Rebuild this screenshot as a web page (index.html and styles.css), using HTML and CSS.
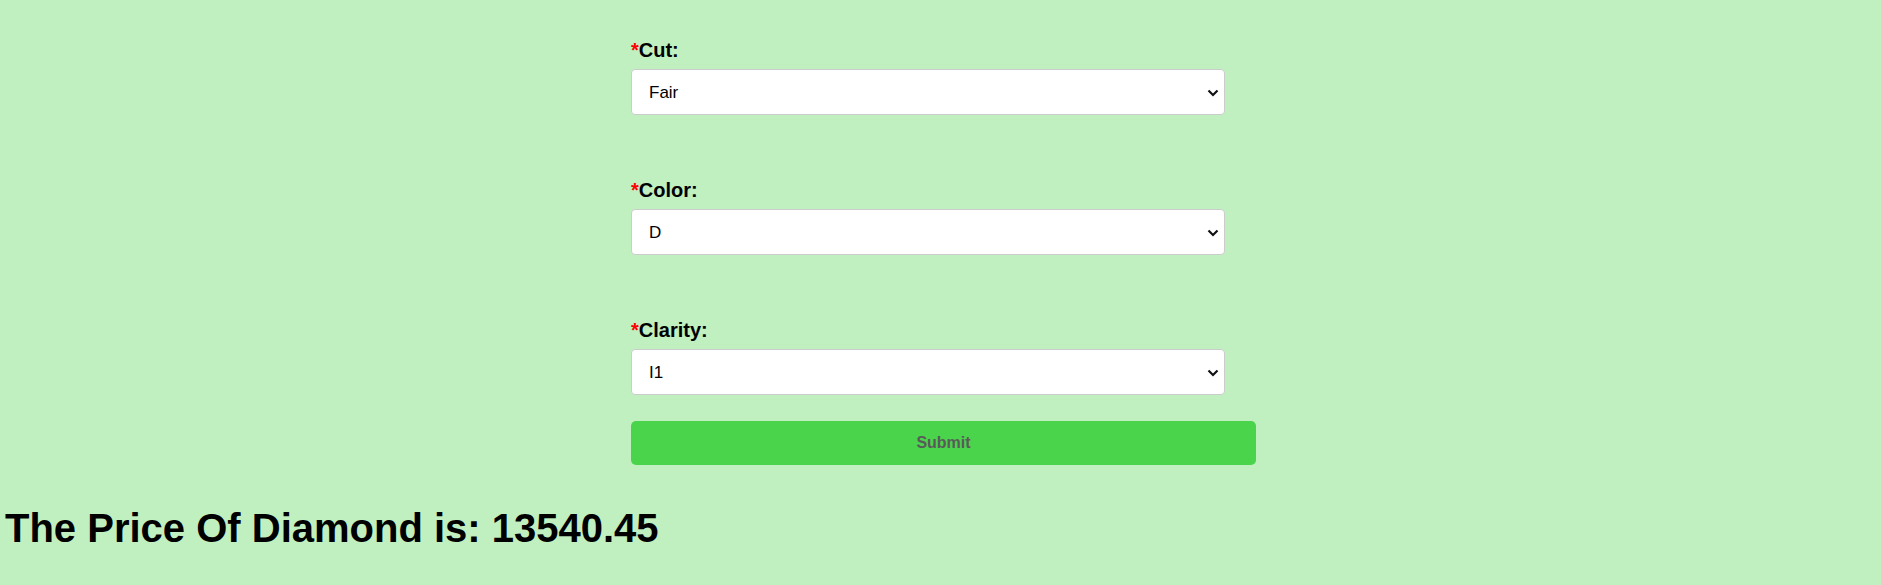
FILE: index.html
```html
<!DOCTYPE html>
<html lang="en">
<head>
<meta charset="utf-8">
<title>Diamond Price</title>
<link rel="stylesheet" href="styles.css">
</head>
<body>
  <form class="form-wrap">
    <div class="field">
      <label class="field-label" for="cut"><span class="req">*</span>Cut:</label>
      <div class="select-box">
        <select id="cut" class="field-select">
          <option>Fair</option>
          <option>Good</option>
          <option>Very Good</option>
          <option>Premium</option>
          <option>Ideal</option>
        </select>
        <svg class="chevron" width="12" height="8" viewBox="0 0 12 8" aria-hidden="true"><path d="M1.5 1.5 L6 6 L10.5 1.5" fill="none" stroke="#111" stroke-width="2.2"/></svg>
      </div>
    </div>
    <div class="field">
      <label class="field-label" for="color"><span class="req">*</span>Color:</label>
      <div class="select-box">
        <select id="color" class="field-select">
          <option>D</option>
          <option>E</option>
          <option>F</option>
          <option>G</option>
          <option>H</option>
          <option>I</option>
          <option>J</option>
        </select>
        <svg class="chevron" width="12" height="8" viewBox="0 0 12 8" aria-hidden="true"><path d="M1.5 1.5 L6 6 L10.5 1.5" fill="none" stroke="#111" stroke-width="2.2"/></svg>
      </div>
    </div>
    <div class="field">
      <label class="field-label" for="clarity"><span class="req">*</span>Clarity:</label>
      <div class="select-box">
        <select id="clarity" class="field-select">
          <option>I1</option>
          <option>SI2</option>
          <option>SI1</option>
          <option>VS2</option>
          <option>VS1</option>
          <option>VVS2</option>
          <option>VVS1</option>
          <option>IF</option>
        </select>
        <svg class="chevron" width="12" height="8" viewBox="0 0 12 8" aria-hidden="true"><path d="M1.5 1.5 L6 6 L10.5 1.5" fill="none" stroke="#111" stroke-width="2.2"/></svg>
      </div>
    </div>
    <button type="button" class="submit-btn">Submit</button>
  </form>
  <h1 class="result">The Price Of Diamond is: 13540.45</h1>
</body>
</html>
```

FILE: styles.css
```css
* {
  box-sizing: border-box;
}

html, body {
  margin: 0;
  padding: 0;
}

body {
  background: #c0efc0;
  font-family: "Liberation Sans", Arial, sans-serif;
  color: #000;
  padding-top: 39px;
}

.form-wrap {
  width: 631px;
  margin: 0 auto;
  padding-left: 6px;
  display: flex;
  flex-direction: column;
}

.field {
  display: flex;
  flex-direction: column;
  margin-bottom: 64px;
}

.field:nth-child(3) {
  margin-bottom: 26px;
}

.field-label {
  font-size: 20px;
  font-weight: bold;
  line-height: 23px;
  margin-bottom: 7px;
}

.req {
  color: #ff0000;
}

.select-box {
  position: relative;
  width: 95%;
}

.field-select {
  display: block;
  width: 100%;
  height: 46px;
  -webkit-appearance: none;
  appearance: none;
  background: #ffffff;
  border: 1px solid #cccccc;
  border-radius: 4px;
  padding: 0 30px 0 17px;
  font-family: "Liberation Sans", Arial, sans-serif;
  font-size: 17px;
  color: #000;
}

.chevron {
  position: absolute;
  right: 6px;
  top: 20px;
  pointer-events: none;
}

.submit-btn {
  width: 100%;
  height: 44px;
  border: none;
  border-radius: 5px;
  background: #4ad44c;
  color: #5a5a5a;
  font-family: "Liberation Sans", Arial, sans-serif;
  font-size: 16px;
  font-weight: bold;
}

.result {
  margin: 40px 0 0 0;
  padding-left: 5px;
  font-size: 40px;
  font-weight: bold;
  line-height: 46px;
}
```
